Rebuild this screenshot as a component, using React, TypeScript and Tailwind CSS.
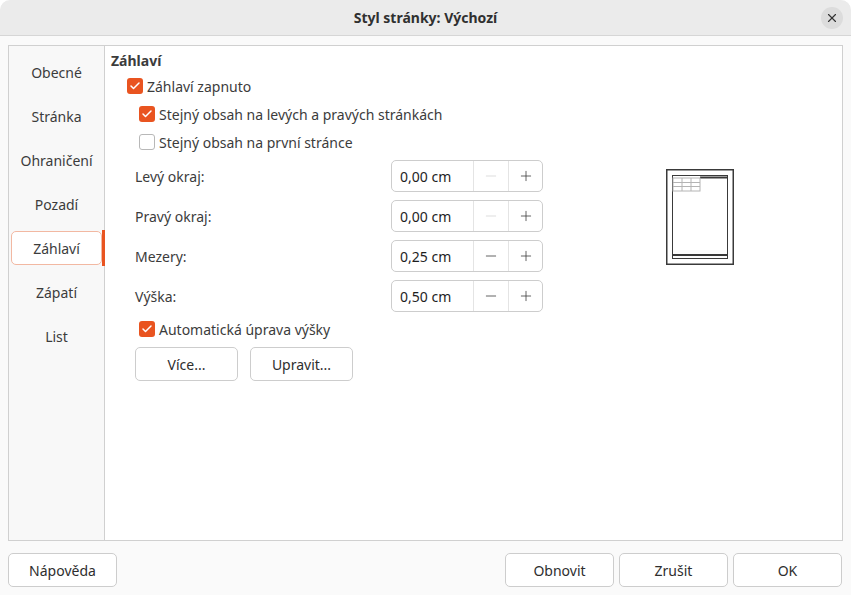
import { Check, Minus, Plus, X } from 'lucide-react';

const font = { fontFamily: '"Noto Sans", "DejaVu Sans", sans-serif' };

const tabs = ['Obecné', 'Stránka', 'Ohraničení', 'Pozadí', 'Záhlaví', 'Zápatí', 'List'];

const CheckBox = ({ checked }: { checked: boolean }) =>
    checked ? (
        <span className="w-4 h-4 rounded-[3px] bg-[#e95420] flex items-center justify-center shrink-0">
            <Check className="w-3 h-3 text-white" strokeWidth={3} />
        </span>
    ) : (
        <span className="w-4 h-4 rounded-[3px] bg-white border border-[#b8b8b8] shrink-0" />
    );

const CheckRow = ({ checked, label, indent }: { checked: boolean; label: string; indent: string }) => (
    <div className={`h-[28px] flex items-center gap-1 ${indent}`}>
        <CheckBox checked={checked} />
        <span className="text-[14px] text-[#3c3c3c]">{label}</span>
    </div>
);

const SpinRow = ({ label, value, canDecrease }: { label: string; value: string; canDecrease: boolean }) => (
    <div className="h-8 flex items-center">
        <span className="w-[256px] text-[14px] text-[#3c3c3c]">{label}</span>
        <div className="w-[152px] h-8 flex rounded-[5px] border border-[#cdcdcd] bg-white">
            <div className="w-[81px] flex items-center pl-2 text-[14px] text-[#1e1e1e]">{value}</div>
            <div className="w-[35px] flex items-center justify-center border-l border-[#e4e4e4]">
                <Minus className={`w-4 h-4 ${canDecrease ? 'text-[#3c3c3c]' : 'text-[#d4d4d4]'}`} strokeWidth={1.2} />
            </div>
            <div className="flex-1 flex items-center justify-center border-l border-[#e4e4e4]">
                <Plus className="w-4 h-4 text-[#3c3c3c]" strokeWidth={1.2} />
            </div>
        </div>
    </div>
);

// little page thumbnail with the header band on top
const PagePreview = () => (
    <svg width="68" height="96" viewBox="0 0 68 96" className="mt-[9px] ml-[123px]">
        <rect x="0.75" y="0.75" width="66.5" height="94.5" fill="white" stroke="#3a3a3a" strokeWidth="1.5" />
        <rect x="6.5" y="6.5" width="55" height="83" fill="white" stroke="#3a3a3a" strokeWidth="1" />
        <line x1="34" y1="8.5" x2="61" y2="8.5" stroke="#3a3a3a" strokeWidth="2" />
        <g stroke="#b4b4b4" strokeWidth="1" fill="none">
            <rect x="7" y="9" width="27" height="13" />
            <line x1="7" y1="13.5" x2="34" y2="13.5" />
            <line x1="7" y1="17.5" x2="34" y2="17.5" />
            <line x1="16" y1="9" x2="16" y2="22" />
            <line x1="25" y1="9" x2="25" y2="22" />
        </g>
        <line x1="7" y1="86" x2="61" y2="86" stroke="#3a3a3a" strokeWidth="2" />
    </svg>
);

const DialogButton = ({ label }: { label: string }) => (
    <button className="w-[109px] h-[34px] rounded-[5px] border border-[#cdcdcd] bg-white text-[14px] text-[#2e2e2e]">
        {label}
    </button>
);

export default function App() {
    return (
        <div className="w-[851px] h-[595px] bg-[#fafafa] rounded-t-[10px] overflow-hidden flex flex-col" style={font}>
            <header className="h-[36px] shrink-0 bg-[#ebebeb] border-b border-[#d6d6d6] flex items-center justify-center relative">
                <h1 className="text-[14px] font-bold text-[#303030]">Styl stránky: Výchozí</h1>
                <button className="absolute right-[8px] top-[7px] w-[22px] h-[22px] rounded-full bg-[#dcdcdc] flex items-center justify-center">
                    <X className="w-[14px] h-[14px] text-[#333]" strokeWidth={2} />
                </button>
            </header>

            <div className="mt-[9px] mx-[8px] h-[496px] shrink-0 border border-[#d0d0d0] flex">
                <nav className="w-[96px] bg-[#f8f8f8] border-r border-[#d0d0d0] pt-[9px] flex flex-col gap-[10px]">
                    {tabs.map((tab) => (
                        <div key={tab} className="relative h-[34px]">
                            <div
                                className={`h-full ml-[2px] mr-[2px] flex items-center justify-center text-[14px] text-[#3c3c3c] rounded-[5px] ${
                                    tab === 'Záhlaví' ? 'border border-[#f2b8a2] bg-white' : ''
                                }`}
                            >
                                {tab}
                            </div>
                            {tab === 'Záhlaví' && (
                                <span className="absolute -right-[1px] -top-[1px] w-[3px] h-[36px] bg-[#e95420]" />
                            )}
                        </div>
                    ))}
                </nav>

                <section className="flex-1 bg-white pl-[6px] pt-[5px]">
                    <h2 className="h-5 text-[14px] font-bold text-[#3c3c3c] leading-5">Záhlaví</h2>
                    <div className="mt-[1px]">
                        <CheckRow checked label="Záhlaví zapnuto" indent="ml-[16px]" />
                        <CheckRow checked label="Stejný obsah na levých a pravých stránkách" indent="ml-[28px]" />
                        <CheckRow checked={false} label="Stejný obsah na první stránce" indent="ml-[28px]" />
                    </div>

                    <div className="ml-[24px] mt-[4px] flex">
                        <div className="flex flex-col gap-2">
                            <SpinRow label="Levý okraj:" value="0,00 cm" canDecrease={false} />
                            <SpinRow label="Pravý okraj:" value="0,00 cm" canDecrease={false} />
                            <SpinRow label="Mezery:" value="0,25 cm" canDecrease />
                            <SpinRow label="Výška:" value="0,50 cm" canDecrease />
                        </div>
                        <PagePreview />
                    </div>

                    <div className="mt-[3px]">
                        <CheckRow checked label="Automatická úprava výšky" indent="ml-[28px]" />
                    </div>

                    <div className="ml-[24px] mt-[4px] flex gap-[12px]">
                        <button className="w-[103px] h-[34px] rounded-[5px] border border-[#cdcdcd] bg-white text-[14px] text-[#2e2e2e]">
                            Více...
                        </button>
                        <button className="w-[103px] h-[34px] rounded-[5px] border border-[#cdcdcd] bg-white text-[14px] text-[#2e2e2e]">
                            Upravit...
                        </button>
                    </div>
                </section>
            </div>

            <footer className="mt-[12px] pl-[8px] pr-[9px] flex">
                <DialogButton label="Nápověda" />
                <div className="ml-auto flex gap-[5px]">
                    <DialogButton label="Obnovit" />
                    <DialogButton label="Zrušit" />
                    <DialogButton label="OK" />
                </div>
            </footer>
        </div>
    );
}
